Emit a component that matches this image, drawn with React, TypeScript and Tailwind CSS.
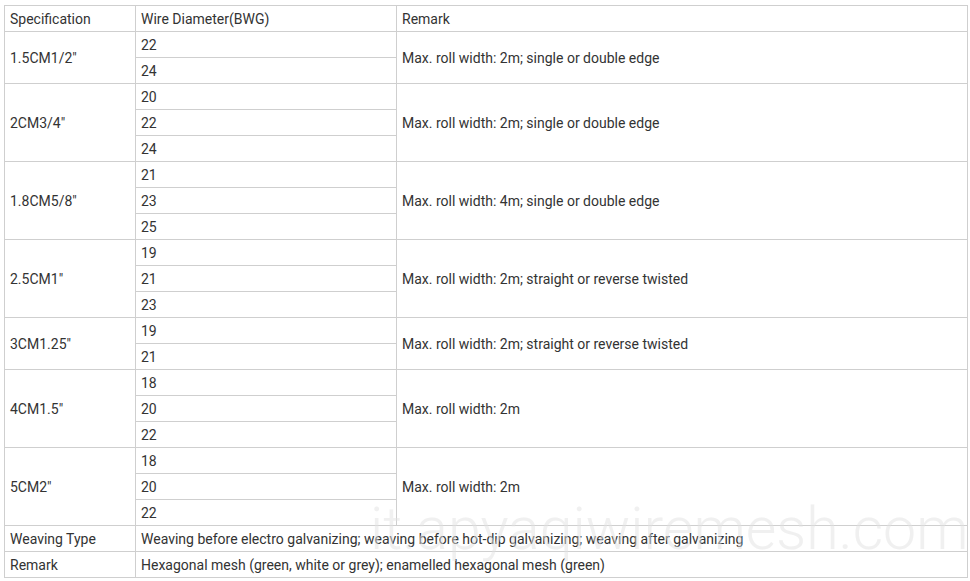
import React from "react";

type Group = { spec: string; wires: string[]; remark: string };

const groups: Group[] = [
  { spec: "1.5CM1/2\"", wires: ["22", "24"], remark: "Max. roll width: 2m; single or double edge" },
  { spec: "2CM3/4\"", wires: ["20", "22", "24"], remark: "Max. roll width: 2m; single or double edge" },
  { spec: "1.8CM5/8\"", wires: ["21", "23", "25"], remark: "Max. roll width: 4m; single or double edge" },
  { spec: "2.5CM1\"", wires: ["19", "21", "23"], remark: "Max. roll width: 2m; straight or reverse twisted" },
  { spec: "3CM1.25\"", wires: ["19", "21"], remark: "Max. roll width: 2m; straight or reverse twisted" },
  { spec: "4CM1.5\"", wires: ["18", "20", "22"], remark: "Max. roll width: 2m" },
  { spec: "5CM2\"", wires: ["18", "20", "22"], remark: "Max. roll width: 2m" },
];

const td = "border border-[#cfcfcf] h-[26px] px-[5px] pt-[1px] pb-0 leading-[18px] align-middle text-left font-normal";

export default function App() {
  return (
    <div className="relative w-[970px] h-[581px] bg-white overflow-hidden text-[14px] text-[#333]" style={{ fontFamily: "Roboto, 'Liberation Sans', sans-serif" }}>
      <div className="pt-[5px] pl-[4px]">
        <table className="border-collapse table-fixed w-[963px]">
          <colgroup>
            <col className="w-[131px]" />
            <col className="w-[261px]" />
            <col className="w-[571px]" />
          </colgroup>
          <tbody>
            <tr>
              <td className={td}>Specification</td>
              <td className={td}>Wire Diameter(BWG)</td>
              <td className={td}>Remark</td>
            </tr>
            {groups.map((g) =>
              g.wires.map((w, i) => (
                <tr key={g.spec + i}>
                  {i === 0 && (
                    <td className={td} rowSpan={g.wires.length}>
                      {g.spec}
                    </td>
                  )}
                  <td className={td}>{w}</td>
                  {i === 0 && (
                    <td className={td} rowSpan={g.wires.length}>
                      {g.remark}
                    </td>
                  )}
                </tr>
              ))
            )}
            <tr>
              <td className={td}>Weaving Type</td>
              <td className={td + " whitespace-nowrap"} colSpan={2}>
                Weaving before electro galvanizing; weaving before hot-dip galvanizing; weaving after galvanizing
              </td>
            </tr>
            <tr>
              <td className={td}>Remark</td>
              <td className={td + " whitespace-nowrap"} colSpan={2}>
                Hexagonal mesh (green, white or grey); enamelled hexagonal mesh (green)
              </td>
            </tr>
          </tbody>
        </table>
      </div>
      <div
        aria-hidden="true"
        className="absolute left-[370px] top-[499px] text-[59px] leading-none font-light text-[#e2e2e2] opacity-50 whitespace-nowrap pointer-events-none"
        style={{ fontFamily: "Roboto, 'Liberation Sans', sans-serif" }}
      >
        it.apyaqiwiremesh.com
      </div>
    </div>
  );
}
